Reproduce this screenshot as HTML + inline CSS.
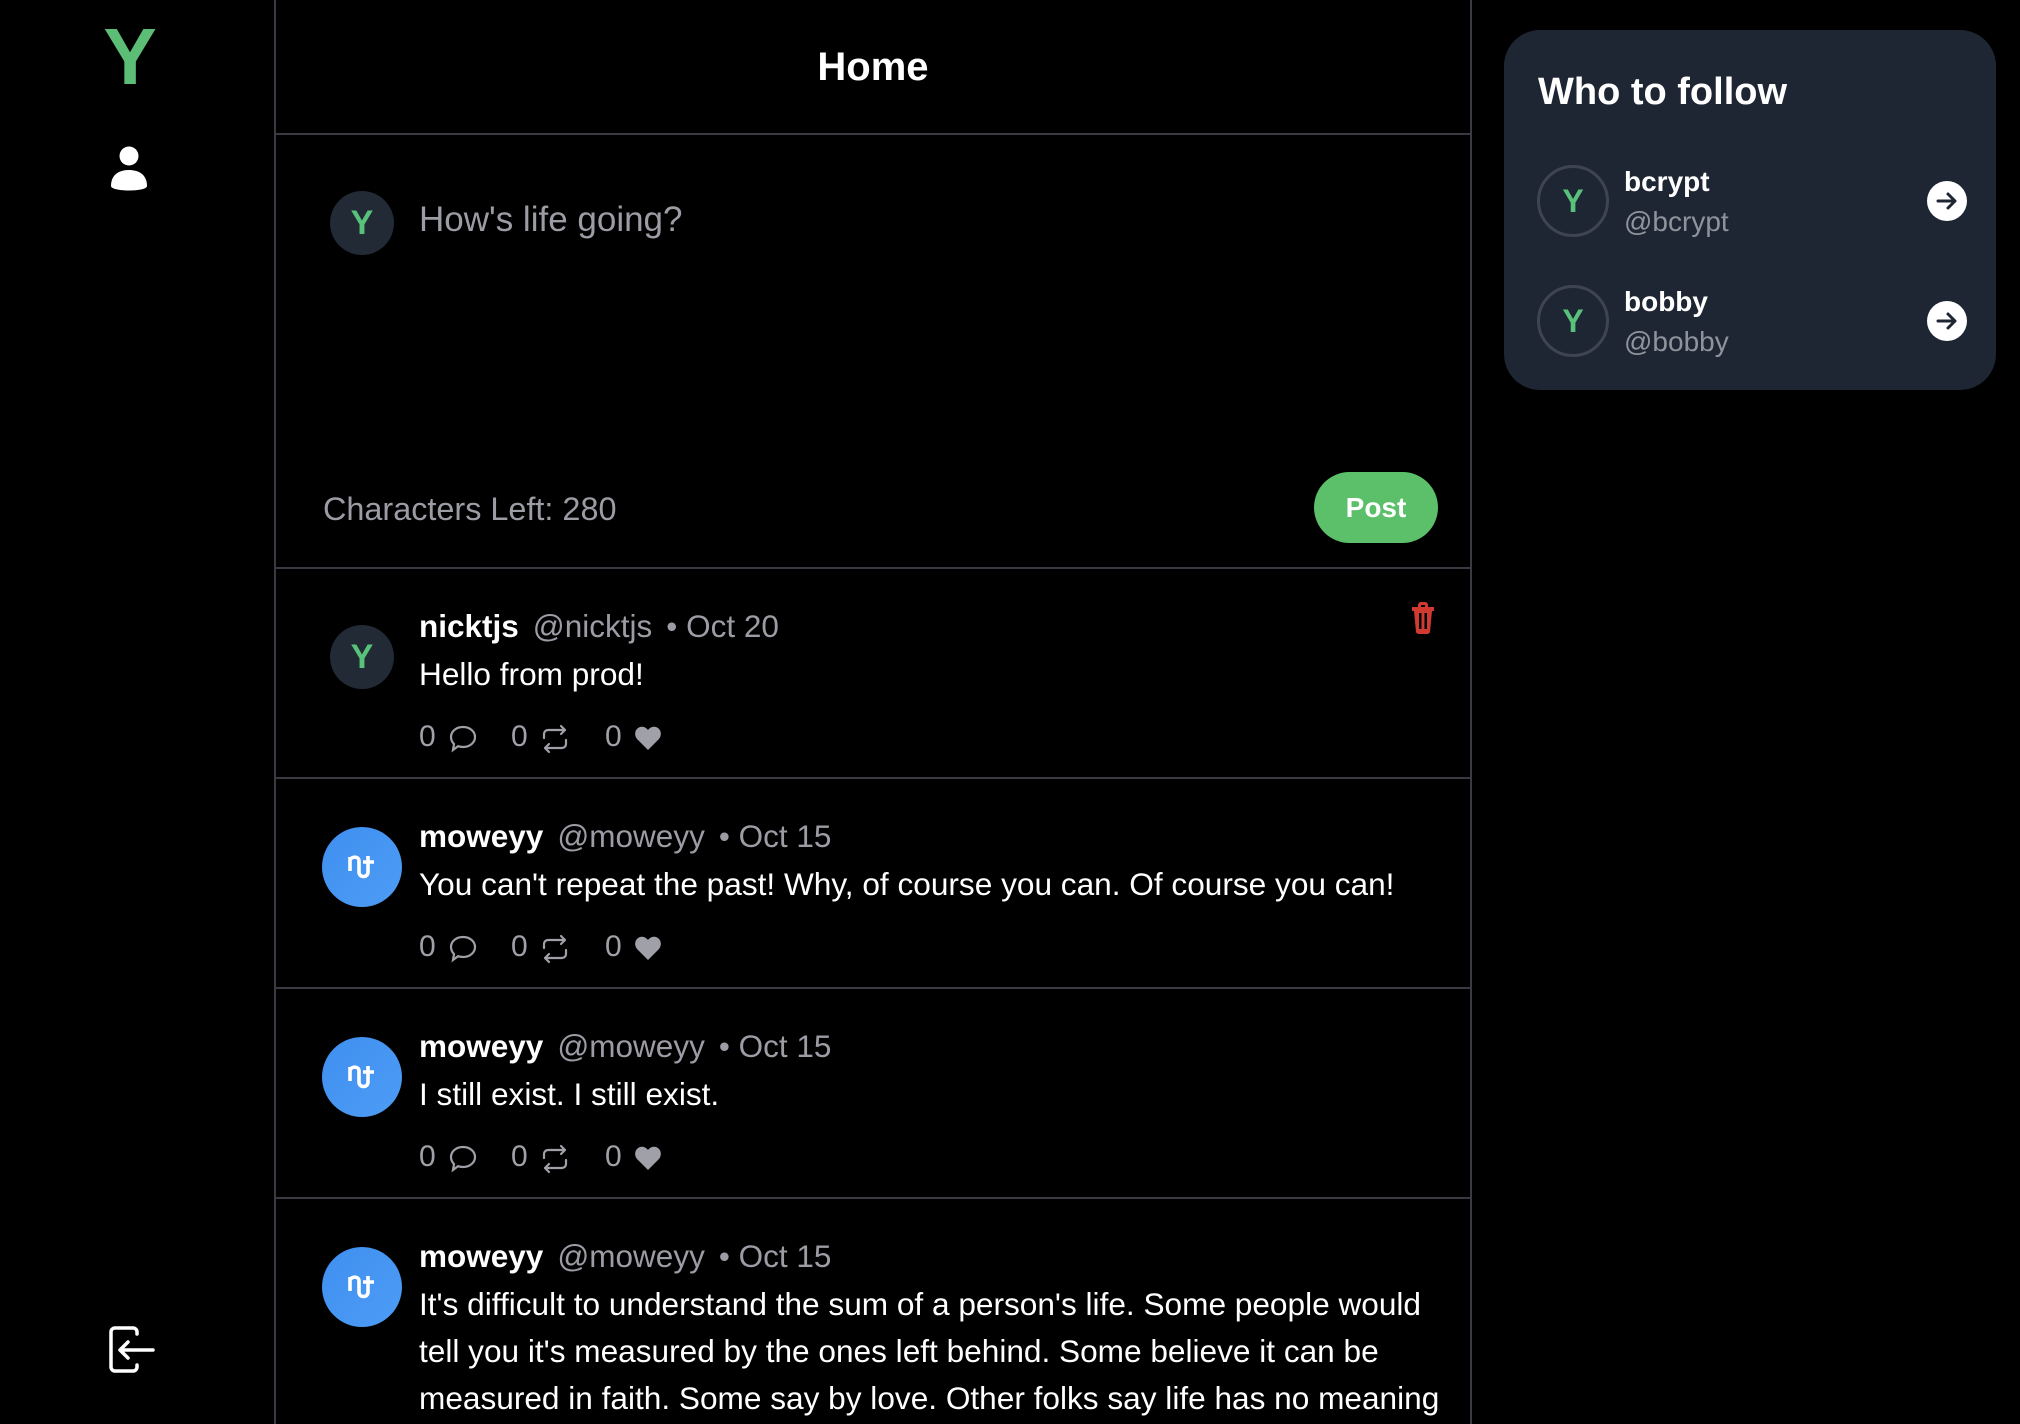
<!DOCTYPE html>
<html><head><meta charset="utf-8"><style>
*{margin:0;padding:0;box-sizing:border-box}
body{width:2020px;height:1424px;background:#000;overflow:hidden;position:relative;font-family:"Liberation Sans",Arial,sans-serif;color:#fff}
.abs{position:absolute}
.vl{position:absolute;top:0;width:2px;height:1424px;background:#3a3b42}
.hl{position:absolute;left:274px;width:1198px;height:2px;background:#3a3b42}
.av{position:absolute;border-radius:50%;display:flex;align-items:center;justify-content:center;font-weight:bold;color:#58c27a}
.dav{width:64px;height:64px;left:330px;background:#222a35;font-size:34px}
.bav{width:80px;height:80px;left:322px;background:linear-gradient(135deg,#3f8ff0,#4d9cf5)}
.hd{position:absolute;left:419px;font-size:31.5px;line-height:36px;white-space:nowrap}
.hd b{color:#fff;margin-right:14px}
.hd span{color:#9c9ca5}
.hd i{font-style:normal;margin-left:14px}
.tx{position:absolute;left:419px;font-size:31.6px;line-height:47px;white-space:nowrap;color:#fff}
.ac{position:absolute;left:419px;height:36px;font-size:30px;color:#a0a0a8}
.ac .n{position:absolute;top:0}
.ac svg{position:absolute}
</style></head><body>
<div class="vl" style="left:274px"></div>
<div class="vl" style="left:1470px"></div>
<div class="abs" style="left:100px;top:16px;width:60px;font-size:80px;line-height:82px;font-weight:bold;color:#5cbd76;text-align:center">Y</div>
<svg class="abs" style="left:108px;top:144px" width="42" height="50" viewBox="0 0 42 50"><circle cx="21" cy="12" r="9.5" fill="#fff"/><path d="M3 42 C3 30 12 26 21 26 C30 26 39 30 39 42 C39 48 3 48 3 42Z" fill="#fff"/></svg>
<svg class="abs" style="left:104px;top:1322px" width="56" height="56" viewBox="0 0 56 56" fill="none" stroke="#fff" stroke-width="3.5" stroke-linecap="round" stroke-linejoin="round"><path d="M33 12 V10 A4 4 0 0 0 29 6 H11 A4 4 0 0 0 7 10 V45 A4 4 0 0 0 11 49 H29 A4 4 0 0 0 33 45 V43"/><path d="M49 28 H16 M24 20 L16 28 L24 36"/></svg>
<div class="abs" style="left:274px;top:45px;width:1198px;text-align:center;font-size:40px;font-weight:900">Home</div>
<div class="hl" style="top:133px"></div>
<div class="av dav" style="top:191px">Y</div>
<div class="abs" style="left:419px;top:200px;font-size:35px;color:#9c9ca5">How's life going?</div>
<div class="abs" style="left:323px;top:491px;font-size:32.4px;color:#9c9ca5">Characters Left: 280</div>
<div class="abs" style="left:1314px;top:472px;width:124px;height:71px;border-radius:36px;background:#5cbf6a;display:flex;align-items:center;justify-content:center;font-size:28px;font-weight:bold">Post</div>
<div class="hl" style="top:567px"></div>

<div class="av dav" style="top:625px">Y</div>
<div class="hd" style="top:608px"><b>nicktjs</b><span>@nicktjs<i>• Oct 20</i></span></div>
<div class="tx" style="top:651px">Hello from prod!</div>
<svg class="abs" style="left:1411px;top:601px" width="24" height="34" viewBox="0 0 24 34" fill="#d03a30"><path d="M7 6 V4 A3 3 0 0 1 10 1 H14 A3 3 0 0 1 17 4 V6 H23 V10 H21 L19 31 A3 3 0 0 1 16 33 H8 A3 3 0 0 1 5 31 L3 10 H1 V6Z M10 4 V6 H14 V4Z M8 12 V28 H10.5 V12Z M13.5 12 V28 H16 V12Z"/></svg>
<div class="ac" style="top:720px">
<span class="n" style="left:0">0</span>
<svg style="left:30px;top:4px" width="28" height="30" viewBox="0 0 28 30" fill="none" stroke="#a0a0a8" stroke-width="2.2"><path d="M14 3 C21 3 26 7.5 26 13 C26 18.5 21 23 14 23 C12 23 10.5 22.7 9 22.2 L4 26 L5 20 C3 18 2 15.5 2 13 C2 7.5 7 3 14 3Z"/></svg>
<span class="n" style="left:92px">0</span>
<svg style="left:120px;top:4px" width="32" height="30" viewBox="0 0 32 30" fill="none" stroke="#a0a0a8" stroke-width="2.2" stroke-linecap="round" stroke-linejoin="round"><path d="M5 14 V10 A4 4 0 0 1 9 6 H26 M22 2 L26 6 L22 10"/><path d="M27 16 V20 A4 4 0 0 1 23 24 H6 M10 20 L6 24 L10 28"/></svg>
<span class="n" style="left:186px">0</span>
<svg style="left:215px;top:5px" width="28" height="26" viewBox="0 0 28 26" fill="#a0a0a8"><path d="M14 25 L3.5 14.5 C0 11 0.5 5 4.5 2.7 C8 0.8 11.8 2 14 5 C16.2 2 20 0.8 23.5 2.7 C27.5 5 28 11 24.5 14.5Z"/></svg>
</div>
<div class="hl" style="top:777px"></div>

<div class="av bav" style="top:827px"><svg width="30" height="32" viewBox="0 0 30 32" fill="none" stroke="#fff" stroke-width="3.6" stroke-linejoin="round"><path d="M3 6 V20 M3 9 C5 5 12 5 12 10 V21 C12 27 21 27 21 21 V5 M16 11 H27"/></svg></div>
<div class="hd" style="top:818px"><b>moweyy</b><span>@moweyy<i>• Oct 15</i></span></div>
<div class="tx" style="top:861px">You can't repeat the past! Why, of course you can. Of course you can!</div>
<div class="ac" style="top:930px">
<span class="n" style="left:0">0</span>
<svg style="left:30px;top:4px" width="28" height="30" viewBox="0 0 28 30" fill="none" stroke="#a0a0a8" stroke-width="2.2"><path d="M14 3 C21 3 26 7.5 26 13 C26 18.5 21 23 14 23 C12 23 10.5 22.7 9 22.2 L4 26 L5 20 C3 18 2 15.5 2 13 C2 7.5 7 3 14 3Z"/></svg>
<span class="n" style="left:92px">0</span>
<svg style="left:120px;top:4px" width="32" height="30" viewBox="0 0 32 30" fill="none" stroke="#a0a0a8" stroke-width="2.2" stroke-linecap="round" stroke-linejoin="round"><path d="M5 14 V10 A4 4 0 0 1 9 6 H26 M22 2 L26 6 L22 10"/><path d="M27 16 V20 A4 4 0 0 1 23 24 H6 M10 20 L6 24 L10 28"/></svg>
<span class="n" style="left:186px">0</span>
<svg style="left:215px;top:5px" width="28" height="26" viewBox="0 0 28 26" fill="#a0a0a8"><path d="M14 25 L3.5 14.5 C0 11 0.5 5 4.5 2.7 C8 0.8 11.8 2 14 5 C16.2 2 20 0.8 23.5 2.7 C27.5 5 28 11 24.5 14.5Z"/></svg>
</div>
<div class="hl" style="top:987px"></div>

<div class="av bav" style="top:1037px"><svg width="30" height="32" viewBox="0 0 30 32" fill="none" stroke="#fff" stroke-width="3.6" stroke-linejoin="round"><path d="M3 6 V20 M3 9 C5 5 12 5 12 10 V21 C12 27 21 27 21 21 V5 M16 11 H27"/></svg></div>
<div class="hd" style="top:1028px"><b>moweyy</b><span>@moweyy<i>• Oct 15</i></span></div>
<div class="tx" style="top:1071px">I still exist. I still exist.</div>
<div class="ac" style="top:1140px">
<span class="n" style="left:0">0</span>
<svg style="left:30px;top:4px" width="28" height="30" viewBox="0 0 28 30" fill="none" stroke="#a0a0a8" stroke-width="2.2"><path d="M14 3 C21 3 26 7.5 26 13 C26 18.5 21 23 14 23 C12 23 10.5 22.7 9 22.2 L4 26 L5 20 C3 18 2 15.5 2 13 C2 7.5 7 3 14 3Z"/></svg>
<span class="n" style="left:92px">0</span>
<svg style="left:120px;top:4px" width="32" height="30" viewBox="0 0 32 30" fill="none" stroke="#a0a0a8" stroke-width="2.2" stroke-linecap="round" stroke-linejoin="round"><path d="M5 14 V10 A4 4 0 0 1 9 6 H26 M22 2 L26 6 L22 10"/><path d="M27 16 V20 A4 4 0 0 1 23 24 H6 M10 20 L6 24 L10 28"/></svg>
<span class="n" style="left:186px">0</span>
<svg style="left:215px;top:5px" width="28" height="26" viewBox="0 0 28 26" fill="#a0a0a8"><path d="M14 25 L3.5 14.5 C0 11 0.5 5 4.5 2.7 C8 0.8 11.8 2 14 5 C16.2 2 20 0.8 23.5 2.7 C27.5 5 28 11 24.5 14.5Z"/></svg>
</div>
<div class="hl" style="top:1197px"></div>

<div class="av bav" style="top:1247px"><svg width="30" height="32" viewBox="0 0 30 32" fill="none" stroke="#fff" stroke-width="3.6" stroke-linejoin="round"><path d="M3 6 V20 M3 9 C5 5 12 5 12 10 V21 C12 27 21 27 21 21 V5 M16 11 H27"/></svg></div>
<div class="hd" style="top:1238px"><b>moweyy</b><span>@moweyy<i>• Oct 15</i></span></div>
<div class="tx" style="top:1281px">It's difficult to understand the sum of a person's life. Some people would<br>tell you it's measured by the ones left behind. Some believe it can be<br>measured in faith. Some say by love. Other folks say life has no meaning</div>

<div class="abs" style="left:1504px;top:30px;width:492px;height:360px;border-radius:36px;background:#1f2633"></div>
<div class="abs" style="left:1538px;top:70px;font-size:38px;font-weight:bold;line-height:44px">Who to follow</div>
<div class="av" style="left:1537px;top:165px;width:72px;height:72px;border:3px solid #3e4550;font-size:32px">Y</div>
<div class="abs" style="left:1624px;top:165px;font-size:28px;font-weight:bold;line-height:34px">bcrypt</div>
<div class="abs" style="left:1624px;top:205px;font-size:28px;color:#8f949c;line-height:34px">@bcrypt</div>
<svg class="abs" style="left:1927px;top:181px" width="40" height="40" viewBox="0 0 40 40"><circle cx="20" cy="20" r="20" fill="#fff"/><path d="M11 20 H28 M21 13 L28 20 L21 27" fill="none" stroke="#1f2633" stroke-width="3" stroke-linecap="round" stroke-linejoin="round"/></svg>
<div class="av" style="left:1537px;top:285px;width:72px;height:72px;border:3px solid #3e4550;font-size:32px">Y</div>
<div class="abs" style="left:1624px;top:285px;font-size:28px;font-weight:bold;line-height:34px">bobby</div>
<div class="abs" style="left:1624px;top:325px;font-size:28px;color:#8f949c;line-height:34px">@bobby</div>
<svg class="abs" style="left:1927px;top:301px" width="40" height="40" viewBox="0 0 40 40"><circle cx="20" cy="20" r="20" fill="#fff"/><path d="M11 20 H28 M21 13 L28 20 L21 27" fill="none" stroke="#1f2633" stroke-width="3" stroke-linecap="round" stroke-linejoin="round"/></svg>
</body></html>
